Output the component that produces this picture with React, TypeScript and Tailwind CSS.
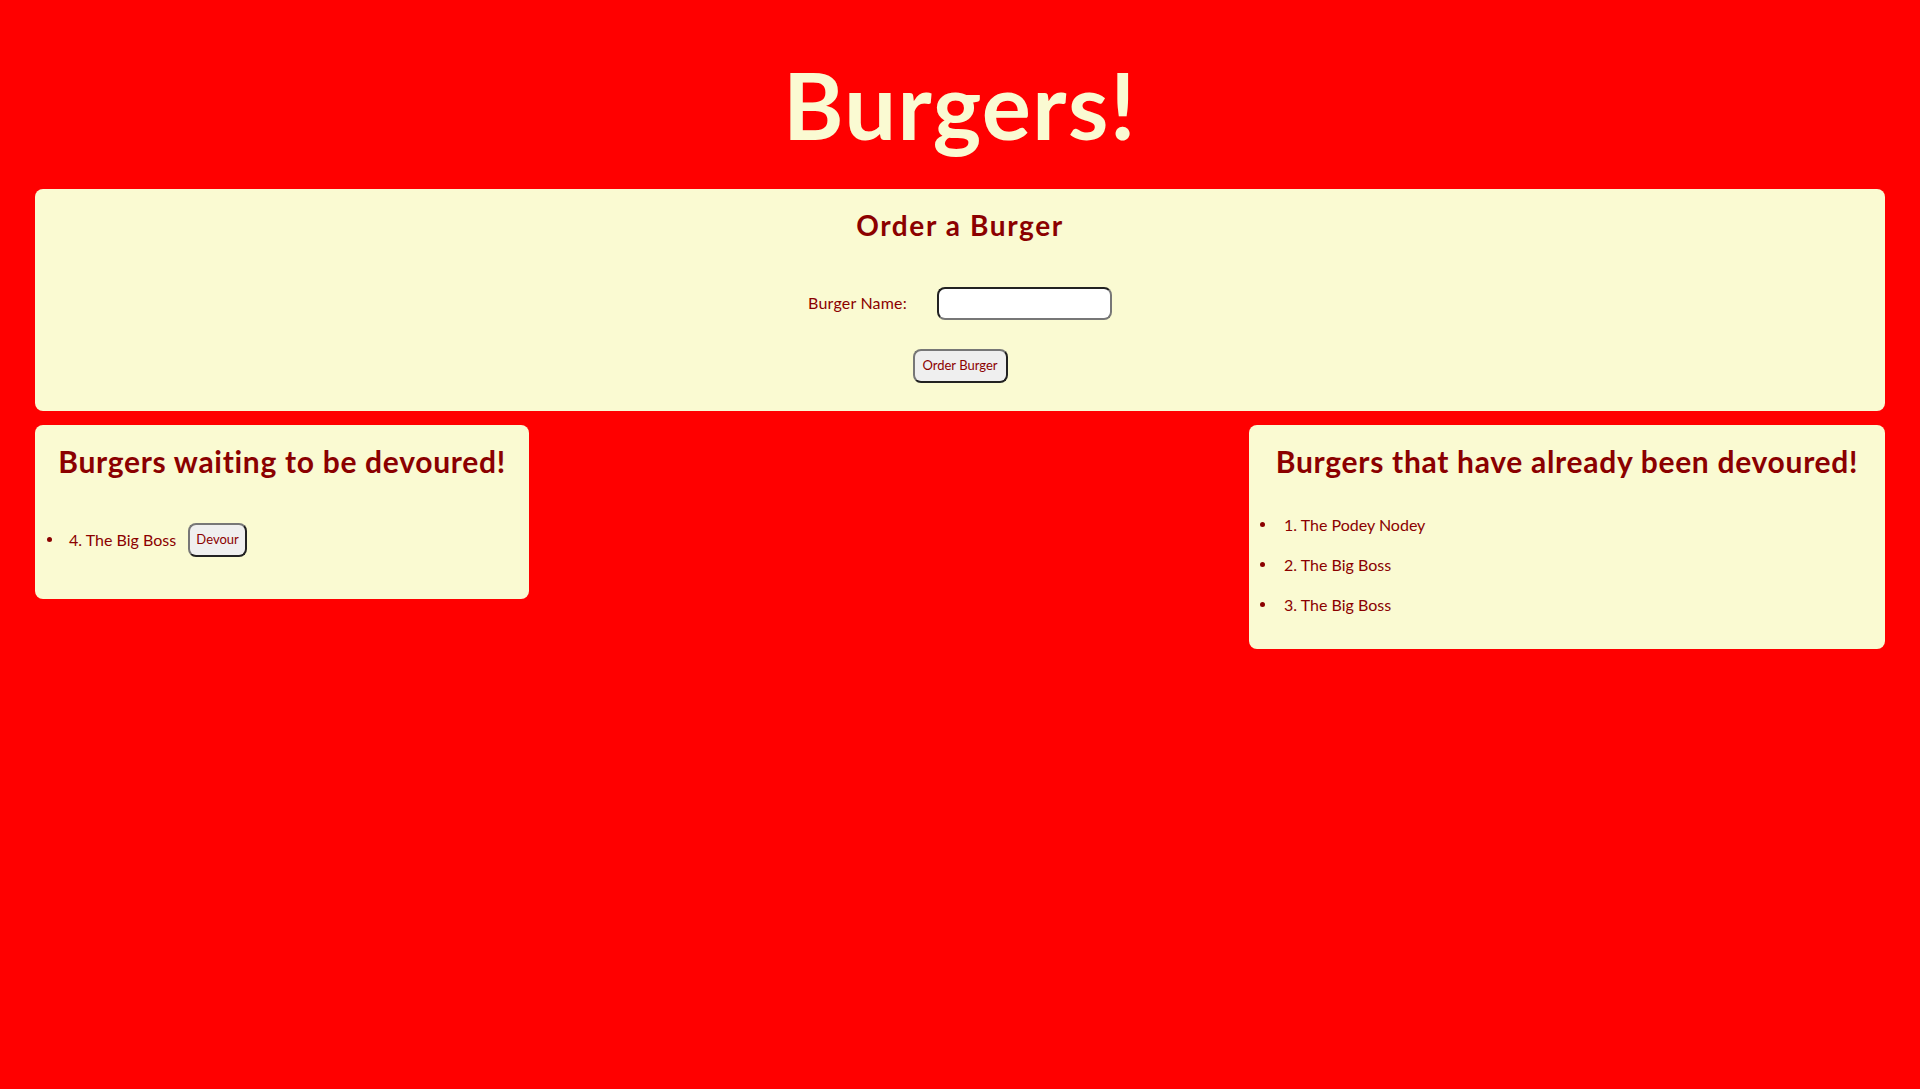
import { useState } from "react"

type Burger = { id: number; name: string; devoured: boolean }

const initial: Burger[] = [
  { id: 1, name: "The Podey Nodey", devoured: true },
  { id: 2, name: "The Big Boss", devoured: true },
  { id: 3, name: "The Big Boss", devoured: true },
  { id: 4, name: "The Big Boss", devoured: false },
]

const font = "font-['Lato','Liberation_Sans',sans-serif]"

function Dot() {
  return <span className="w-[5px] h-[5px] rounded-full bg-[#8b0000] shrink-0" />
}

function Btn({ children, className = "", onClick }: { children: React.ReactNode; className?: string; onClick?: () => void }) {
  return (
    <button
      onClick={onClick}
      className={`h-[34px] rounded-[8px] border-2 border-t-[#777] border-l-[#777] border-b-[#222] border-r-[#222] bg-[#efefef] text-[13px] text-[#8b0000] ${className}`}
    >
      {children}
    </button>
  )
}

export default function App() {
  const [burgers, setBurgers] = useState(initial)
  const [name, setName] = useState("")

  const waiting = burgers.filter((b) => !b.devoured)
  const eaten = burgers.filter((b) => b.devoured)

  const addBurger = () => {
    if (!name.trim()) return
    setBurgers([...burgers, { id: burgers.length + 1, name, devoured: false }])
    setName("")
  }

  const devour = (id: number) => {
    setBurgers(burgers.map((b) => (b.id === id ? { ...b, devoured: true } : b)))
  }

  return (
    <div className={`min-h-[1089px] bg-[#ff0000] ${font} text-[#8b0000]`}>
      <h1 className="pt-[59px] text-center text-[92px] leading-none font-bold tracking-[1.4px] text-[#fafad2]">Burgers!</h1>

      {/* order form */}
      <div className="mx-[35px] mt-[38px] rounded-[8px] bg-[#fafad2] pt-[20px] pb-[28px] flex flex-col items-center">
        <h2 className="text-[28px] leading-[1.2] font-bold tracking-[1.6px]">Order a Burger</h2>
        <div className="mt-[44px] flex items-center gap-[30px]">
          <label className="text-[16px] tracking-[0.2px]">Burger Name:</label>
          <input
            value={name}
            onChange={(e) => setName(e.target.value)}
            className="w-[175px] h-[33px] rounded-[8px] border-2 border-t-[#222] border-l-[#222] border-b-[#777] border-r-[#777] bg-white px-2 text-[16px] outline-none"
          />
        </div>
        <Btn className="mt-[29px] w-[95px]" onClick={addBurger}>
          Order Burger
        </Btn>
      </div>

      <div className="mx-[35px] mt-[14px] flex justify-between items-start">
        {/* waiting */}
        <div className="w-[494px] rounded-[8px] bg-[#fafad2] pt-[18px] pb-[42px]">
          <h2 className="text-center text-[30px] leading-[1.2] font-bold tracking-[0.7px]">Burgers waiting to be devoured!</h2>
          <ul className="mt-[44px]">
            {waiting.map((b) => (
              <li key={b.id} className="h-[34px] flex items-center pl-[12px]">
                <Dot />
                <span className="ml-[17px] text-[16px]">
                  {b.id}. {b.name}
                </span>
                <Btn className="ml-[12px] w-[59px]" onClick={() => devour(b.id)}>
                  Devour
                </Btn>
              </li>
            ))}
          </ul>
        </div>

        {/* devoured */}
        <div className="w-[636px] rounded-[8px] bg-[#fafad2] pt-[18px] pb-[24px]">
          <h2 className="text-center text-[30px] leading-[1.2] font-bold tracking-[0.7px]">Burgers that have already been devoured!</h2>
          <ul className="mt-[26px]">
            {eaten.map((b) => (
              <li key={b.id} className="h-[40px] flex items-center pl-[11px]">
                <Dot />
                <span className="ml-[19px] text-[16px]">
                  {b.id}. {b.name}
                </span>
              </li>
            ))}
          </ul>
        </div>
      </div>
    </div>
  )
}
